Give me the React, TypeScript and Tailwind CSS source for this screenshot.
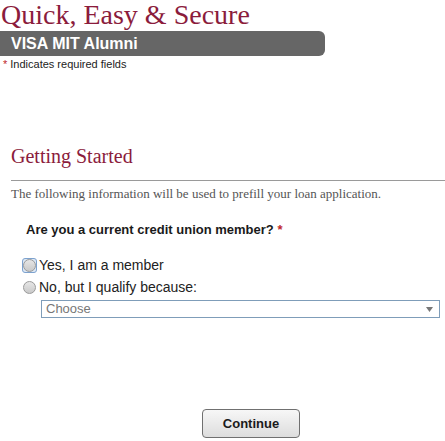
import React, { useState } from 'react';

const sans = "font-['Liberation_Sans',Arial,sans-serif]";
const serif = "font-['Liberation_Serif','Times_New_Roman',serif]";

function Radio({ checked, focused }: { checked: boolean; focused?: boolean }) {
  return (
    <span
      className={`flex items-center justify-center w-[15px] h-[15px] shrink-0 rounded-[3px] ${
        focused ? 'border border-[#7da2ce] bg-[#dce8f6]' : ''
      }`}
    >
      <span className="flex items-center justify-center w-[13px] h-[13px] rounded-full border border-[#9a9a9a] bg-linear-to-b from-[#e6e6e6] to-[#c9c9c9]">
        {checked && <span className="w-[5px] h-[5px] rounded-full bg-[#333]" />}
      </span>
    </span>
  );
}

export default function App() {
  const [member, setMember] = useState('');

  return (
    <div className={`w-[445px] h-[441px] bg-white overflow-hidden ${sans}`}>
      <h1 className={`${serif} text-[28px] leading-[30px] text-[#8b1c3c] pl-[1px] whitespace-nowrap`}>
        Quick, Easy &amp; Secure
      </h1>

      <div className="mt-[1px] h-[25px] w-[325px] bg-[#666] rounded-r-[6px] pl-[11px] text-white font-bold text-[16px] leading-[25px]">
        VISA MIT Alumni
      </div>

      <p className="mt-[2px] pl-[3px] text-[11px] leading-[13px] text-[#222]">
        <span className="text-[#c0272d] text-[11px] mr-[3px]">*</span>Indicates required fields
      </p>

      <h2 className={`${serif} mt-[75px] pl-[11px] text-[20px] leading-[20px] text-[#8b1c3c]`}>
        Getting Started
      </h2>
      <div className="mt-[14px] ml-[11px] h-px bg-[#9a9a9a]" />

      <p className={`${serif} mt-[5px] pl-[11px] text-[13px] leading-[16px] text-[#555] whitespace-nowrap`}>
        The following information will be used to prefill your loan application.
      </p>

      <p className="mt-[20px] pl-[26px] text-[13px] leading-[16px] font-bold text-[#1a1a1a]">
        Are you a current credit union member? <span className="text-[#c0272d]">*</span>
      </p>

      <div className="mt-[16px] pl-[22px] text-[14px] leading-[22px] text-[#222]">
        <label className="flex items-center gap-[1px]" onClick={() => setMember('yes')}>
          <Radio checked={member === 'yes'} focused />
          <span className="ml-[1px]">Yes, I am a member</span>
        </label>
        <label className="flex items-center gap-[1px]" onClick={() => setMember('no')}>
          <Radio checked={member === 'no'} />
          <span className="ml-[1px]">No, but I qualify because:</span>
        </label>
      </div>

      <div className="mt-[2px] ml-[41px] w-[399px] h-[18px] border border-[#7f9db9] flex items-center justify-between pl-[4px] pr-[6px]">
        <span className="text-[13px] leading-[16px] text-[#777]">Choose</span>
        <svg width="7" height="5" viewBox="0 0 7 5">
          <path d="M0 0h7L3.5 5z" fill="#777" />
        </svg>
      </div>

      <button className="mt-[91px] ml-[202px] w-[98px] h-[29px] rounded-[4px] border border-[#707070] bg-linear-to-b from-[#f7f7f7] to-[#dddddd] text-[13px] font-bold text-[#1a1a1a] flex items-center justify-center">
        Continue
      </button>
    </div>
  );
}
